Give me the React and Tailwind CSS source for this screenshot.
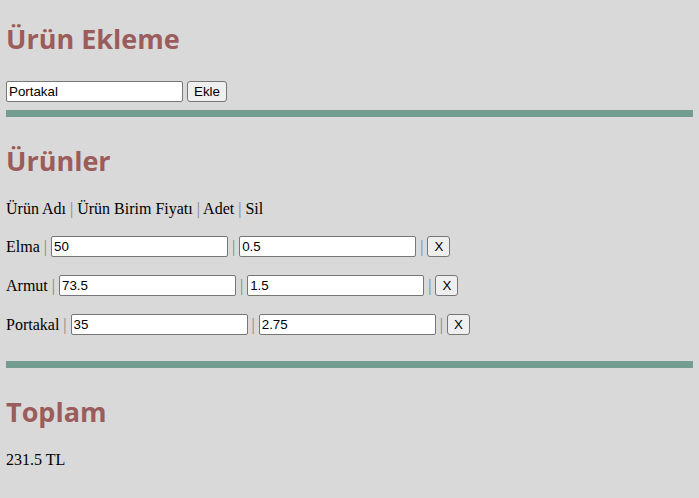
const urunler = [
  { ad: 'Elma', fiyat: '50', adet: '0.5' },
  { ad: 'Armut', fiyat: '73.5', adet: '1.5' },
  { ad: 'Portakal', fiyat: '35', adet: '2.75' },
]

const sans = { fontFamily: '"Liberation Sans", sans-serif' }
const inputCls = 'w-[177px] h-[21px] bg-white border border-[#767676] rounded-[2px] px-[2px] text-[13.33px] text-black outline-none'
const btnCls = 'h-[21px] bg-[#efefef] border border-[#767676] rounded-[3px] px-[6px] text-[13.33px] leading-[19px] text-black'

function Heading({ children }) {
  return (
    <h2 className="text-[27px] font-bold text-[#9b5c5c] leading-[38px]" style={{ fontFamily: '"Open Sans", sans-serif' }}>
      {children}
    </h2>
  )
}

function Pipe() {
  return <span className="text-[#808080]">|</span>
}

export default function App() {
  return (
    <div className="min-h-[498px] bg-[#d9d9d9] px-[6px] pt-[20px] pb-[20px] text-[16px] text-black" style={{ fontFamily: '"Liberation Serif", serif' }}>
      <Heading>Ürün Ekleme</Heading>
      <div className="mt-[23px] flex items-center gap-[4px] leading-[21px]" style={sans}>
        <input className={inputCls} defaultValue="Portakal" />
        <button className={btnCls}>Ekle</button>
      </div>
      <div className="mt-[8px] h-[7px] bg-[#749d92]" />

      <div className="mt-[25px]">
        <Heading>Ürünler</Heading>
      </div>
      <p className="mt-[20px] leading-[18px]">
        Ürün Adı <Pipe /> Ürün Birim Fiyatı <Pipe /> Adet <Pipe /> Sil
      </p>
      <div className="mt-[18px] flex flex-col gap-[18px]">
        {urunler.map((u) => (
          <div key={u.ad} className="flex items-center gap-[4px] leading-[21px]">
            <span>{u.ad}</span>
            <Pipe />
            <input className={inputCls} style={sans} defaultValue={u.fiyat} />
            <Pipe />
            <input className={inputCls} style={sans} defaultValue={u.adet} />
            <Pipe />
            <button className={btnCls} style={sans}>X</button>
          </div>
        ))}
      </div>
      <div className="mt-[26px] h-[7px] bg-[#749d92]" />

      <div className="mt-[25px]">
        <Heading>Toplam</Heading>
      </div>
      <p className="mt-[17px]">231.5 TL</p>
    </div>
  )
}
